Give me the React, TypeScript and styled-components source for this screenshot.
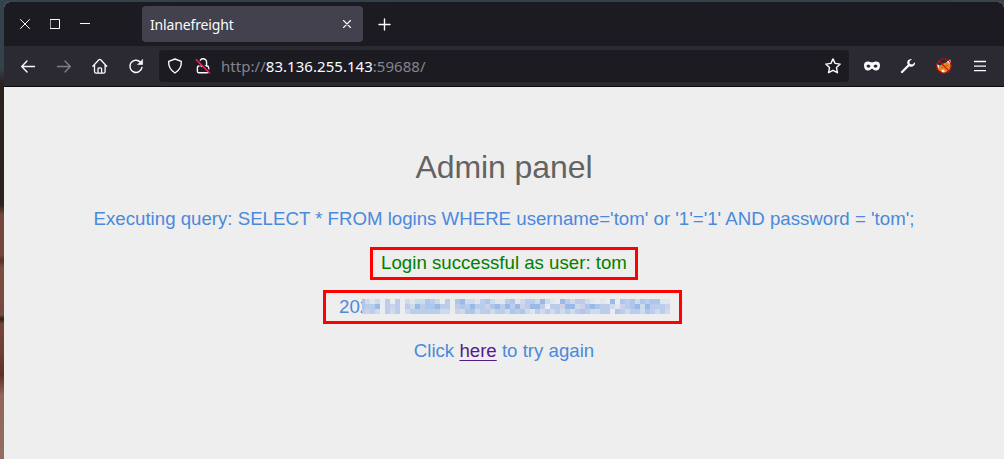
import React from "react";
import styled, { createGlobalStyle } from "styled-components";

const GlobalStyle = createGlobalStyle`
  * { box-sizing: border-box; }
  html, body { margin: 0; padding: 0; overflow: hidden; }
`;

const Desktop = styled.div`
  width: 1004px;
  height: 459px;
  padding: 2px 0 0 4px;
  background:
    linear-gradient(180deg, #34424b 0, #34424b 68px, #2a211f 84px, #2c221f 205px, #74473c 215px, #74473c 255px, #573229 260px, #7c4d41 268px, #754a3f 315px, #2f1d1b 319px, #754539 324px, #6f4035 350px, #603027 375px, #90655a 395px, #946d60 459px) 0 0 / 4px 100% no-repeat,
    linear-gradient(90deg, #35434c, #2f4149 45%, #3a434c);
`;

const Window = styled.div`
  height: 457px;
  display: flex;
  flex-direction: column;
  border-radius: 6px 6px 0 0;
  overflow: hidden;
  background: #eeeeee;
  font-family: "Noto Sans", sans-serif;
`;

const TabBar = styled.div`
  height: 44px;
  flex: none;
  display: flex;
  align-items: center;
  padding-left: 6px;
  background: #1c1b22;
`;

const WindowControls = styled.div`
  display: flex;
  width: 132px;
`;

const WindowControl = styled.span`
  width: 30px;
  height: 30px;
  display: flex;
  align-items: center;
  justify-content: center;
`;

const Tab = styled.div`
  width: 221px;
  height: 36px;
  display: flex;
  align-items: center;
  justify-content: space-between;
  padding: 0 8px;
  border-radius: 4px;
  background: #42414d;
  color: #fbfbfe;
  font-size: 14px;
`;

const TabTitle = styled.span`
  padding-top: 1px;
  line-height: 20px;
  letter-spacing: -0.15px;
`;

const NewTab = styled.span`
  display: flex;
  margin-left: 13px;
`;

const Toolbar = styled.div`
  height: 41px;
  flex: none;
  display: flex;
  align-items: center;
  padding: 0 6px;
  border-bottom: 1px solid #0c0c0d;
  background: #2b2a33;
`;

const ToolButton = styled.span<{ $dim?: boolean }>`
  width: 36px;
  height: 32px;
  display: flex;
  align-items: center;
  justify-content: center;
  opacity: ${(p) => (p.$dim ? 0.4 : 1)};
`;

const AddressBar = styled.div`
  width: 690px;
  height: 32px;
  margin: 0 5px;
  padding-right: 8px;
  display: flex;
  align-items: center;
  border-radius: 4px;
  background: #1c1b22;
`;

const AddressIcon = styled.span`
  width: 28px;
  display: flex;
  justify-content: center;
  &:first-child { margin-left: 2px; }
`;

const Url = styled.span`
  flex: 1;
  margin-left: 4px;
  font-size: 15px;
  letter-spacing: 0.04px;
  line-height: 20px;
  color: #85848c;
`;

const Host = styled.span`
  color: #fbfbfe;
`;

const Page = styled.main`
  flex: 1;
  display: flex;
  flex-direction: column;
  align-items: center;
  padding-top: 60px;
  background: #eeeeee;
  color: #4a89dc;
  font-family: "Liberation Sans", Arial, sans-serif;
`;

const Title = styled.h1`
  margin: 0;
  height: 40px;
  line-height: 40px;
  font-size: 32px;
  font-weight: 400;
  letter-spacing: -0.1px;
  color: #636363;
`;

const Line = styled.div`
  height: 44px;
  display: flex;
  align-items: center;
  font-size: 18.67px;
  white-space: pre;
`;

const Query = styled(Line)`
  margin-top: 10px;
`;

const Outline = styled.div<{ $width: number; $height: number; $tone?: string }>`
  width: ${(p) => p.$width}px;
  height: ${(p) => p.$height}px;
  display: flex;
  align-items: center;
  justify-content: center;
  border: 3px solid #fe0000;
  color: ${(p) => p.$tone || "inherit"};
`;

const CensoredOutline = styled(Outline)`
  justify-content: flex-start;
  margin-right: 3px;
  padding-left: 13px;
`;

const Mosaic = styled.div`
  display: grid;
  position: relative;
  margin: 0 0 1px -8px;
  grid-template-columns: 3px repeat(61, 5px);
  grid-auto-rows: 5px;
`;

const Pixel = styled.span<{ $color: string }>`
  background: ${(p) => p.$color};
`;

const RetryLink = styled.a`
  color: #551a8b;
  text-decoration: underline;
  text-decoration-thickness: 1px;
  text-underline-offset: 3px;
`;

const tones: Record<string, string> = {
  ".": "#ebecef",
  a: "#e0e6ee",
  b: "#cddbec",
  c: "#bbcdea",
  d: "#adc6e9",
  e: "#9bb9e6",
  l: "#cfd1e8",
  t: "#c9ddea",
};

const mosaicRows = [
  "dbat.c.c.batbdcb.c.debbacdbaacdabccbeba.ecbccba.a.e.dcdbdcddaa",
  "dcce.clc.ctecddecc.cdceccldececelceec.ccleetldedccbalcdetecccl",
  "clcb.cbc.bcccccctb.lbddbccbccbdcdbacbcbctcbcdcbbcc.dctccbdcbcb",
];

function CensoredText() {
  return (
    <Mosaic>
      {mosaicRows.flatMap((row, r) =>
        row.split("").map((tone, c) => <Pixel key={`${r}-${c}`} $color={tones[tone]} />)
      )}
    </Mosaic>
  );
}

const stroke = { fill: "none", stroke: "#fbfbfe", strokeWidth: 1.4, strokeLinecap: "round", strokeLinejoin: "round" } as const;

export default function App() {
  return (
    <Desktop>
      <GlobalStyle />
      <Window>
        <TabBar>
          <WindowControls>
            <WindowControl>
              <svg width="10" height="10" {...stroke} strokeWidth={1}><path d="M.5 .5l9 9M9.5 .5l-9 9" /></svg>
            </WindowControl>
            <WindowControl>
              <svg width="10" height="10" {...stroke} strokeLinejoin="miter" strokeWidth={1}><path d="M.5 .5h9v9h-9z" /></svg>
            </WindowControl>
            <WindowControl>
              <svg width="10" height="10" {...stroke} strokeLinecap="butt" strokeWidth={1}><path d="M0 4.5h10" /></svg>
            </WindowControl>
          </WindowControls>
          <Tab>
            <TabTitle>Inlanefreight</TabTitle>
            <svg width="16" height="16" {...stroke} strokeWidth={1.1}><path d="M4.5 4.5l7 7M11.5 4.5l-7 7" /></svg>
          </Tab>
          <NewTab>
            <svg width="16" height="16" {...stroke}><path d="M8.5 3v11M3 8.5h11" /></svg>
          </NewTab>
        </TabBar>
        <Toolbar>
          <ToolButton>
            <svg width="16" height="16" {...stroke}><path d="M1.7 8.5H14.5M7 3L1.7 8.5L7 14" /></svg>
          </ToolButton>
          <ToolButton $dim>
            <svg width="16" height="16" {...stroke}><path d="M1.5 8.5H14.3M9 3l5.3 5.5L9 14" /></svg>
          </ToolButton>
          <ToolButton>
            <svg width="16" height="16" {...stroke} strokeWidth={1.3}>
              <path d="M.9 8.2L6.9 1.8Q7.8 .9 8.7 1.8L14.7 8.2M2.5 7v6.6q0 1.6 1.6 1.6h7.4q1.6 0 1.6-1.6V7M6 15v-4.2q0-1 1-1h1.6q1 0 1 1V15" />
            </svg>
          </ToolButton>
          <ToolButton>
            <svg width="16" height="16" {...stroke}>
              <path d="M12.3 4A6.1 6.1 0 1 0 14 9.4" />
              <path d="M14.6 1.7v4.8H9.8z" fill="#fbfbfe" strokeWidth={0.6} />
            </svg>
          </ToolButton>
          <AddressBar>
            <AddressIcon>
              <svg width="16" height="16" {...stroke}><path d="M8 1L14.3 3.4Q14.8 10.8 8 15Q1.2 10.8 1.7 3.4Z" /></svg>
            </AddressIcon>
            <AddressIcon>
              <svg width="16" height="16" {...stroke}>
                <path d="M4.6 5V4.2a3.5 3.5 0 0 1 7 0V8M6 8h6q1.6 0 1.6 1.6v3.6q0 1.6-1.6 1.6H4q-1.6 0-1.6-1.6V9.6Q2.4 8 4 8" />
                <path d="M2.2 1.2l13 13" stroke="#1c1b22" strokeWidth={1.8} />
                <path d="M1.3 1.8l13.2 13.2" stroke="#ff1a55" strokeWidth={1.6} />
              </svg>
            </AddressIcon>
            <Url>http://<Host>83.136.255.143</Host>:59688/</Url>
            <svg width="16" height="16" {...stroke}>
              <path d="M8 .9L10.1 5.4L15.2 6.1L11.5 9.6L12.4 14.7L8 12.3L3.6 14.7L4.5 9.6L.8 6.1L5.9 5.4Z" />
            </svg>
          </AddressBar>
          <ToolButton>
            <svg width="16" height="16">
              <path fill="#fbfbfe" fillRule="evenodd" d="M4.2 3.5C6 3.5 7 4.4 8 4.4S10 3.5 11.8 3.5C14.8 3.5 16 5 16 7.5C16 10.5 14.5 12.6 12 12.6C9.8 12.6 9.3 10.8 8 10.8S6.2 12.6 4 12.6C1.5 12.6 0 10.5 0 7.5C0 5 1.2 3.5 4.2 3.5ZM4.4 6.5Q2.9 6.5 2.3 8.1Q3.1 9.7 4.5 9.7Q6 9.7 6.6 8.3Q5.8 6.5 4.4 6.5ZM11.6 6.5Q10.2 6.5 9.4 8.3Q10 9.7 11.5 9.7Q12.9 9.7 13.7 8.1Q13.1 6.5 11.6 6.5Z" />
            </svg>
          </ToolButton>
          <ToolButton>
            <svg width="16" height="16">
              <path d="M2 14L9 7" fill="none" stroke="#fbfbfe" strokeWidth="2.3" strokeLinecap="round" />
              <path fill="#fbfbfe" d="M12 1Q9.2 .6 7.8 2.5Q6.8 4 7.4 6L10 8.7Q12.3 9.2 14 7.6Q15.5 6 15 4.2L12.3 6.6L9.8 5.9L9.4 3.5Z" />
            </svg>
          </ToolButton>
          <ToolButton>
            <svg width="16" height="16">
              <path fill="#e48a1c" d="M1 7.2L4 7.6L6 6L10 4.6L13.5 1.5L15 7.5L13.6 11.5L9.8 14.4L5 13.6L2 11.5Z" />
              <path fill="#f3f2ef" d="M.6 5.8L3.4 7.4L2 10.6ZM11 3.2L14.2 1.4L15 5L12.8 5.6ZM5 12.6L7.8 11.6L9 14.6L6.5 14.8Z" />
              <path fill="#55433a" d="M5.2 9.1l1.7-.3-.7 1.3zM10 7.4l1.6-.6-.2 1.4z" />
              <circle cx="8" cy="8" r="7.3" fill="none" stroke="#c50b10" strokeWidth="1.1" />
              <path d="M3 3l10.2 10.2" stroke="#c50b10" strokeWidth="1.1" />
            </svg>
          </ToolButton>
          <ToolButton>
            <svg width="12" height="12" {...stroke} strokeLinecap="butt" strokeWidth={1.3}><path d="M0 1.5h12M0 6.1h12M0 10.6h12" /></svg>
          </ToolButton>
        </Toolbar>
        <Page>
          <Title>Admin panel</Title>
          <Query>Executing query: SELECT * FROM logins WHERE username='tom' or '1'='1' AND password = 'tom';</Query>
          <Line>
            <Outline $width={268} $height={33} $tone="#008000">Login successful as user: tom</Outline>
          </Line>
          <Line>
            <CensoredOutline $width={359} $height={34}>
              <span>202</span>
              <CensoredText />
            </CensoredOutline>
          </Line>
          <Line>Click <RetryLink>here</RetryLink> to try again</Line>
        </Page>
      </Window>
    </Desktop>
  );
}
